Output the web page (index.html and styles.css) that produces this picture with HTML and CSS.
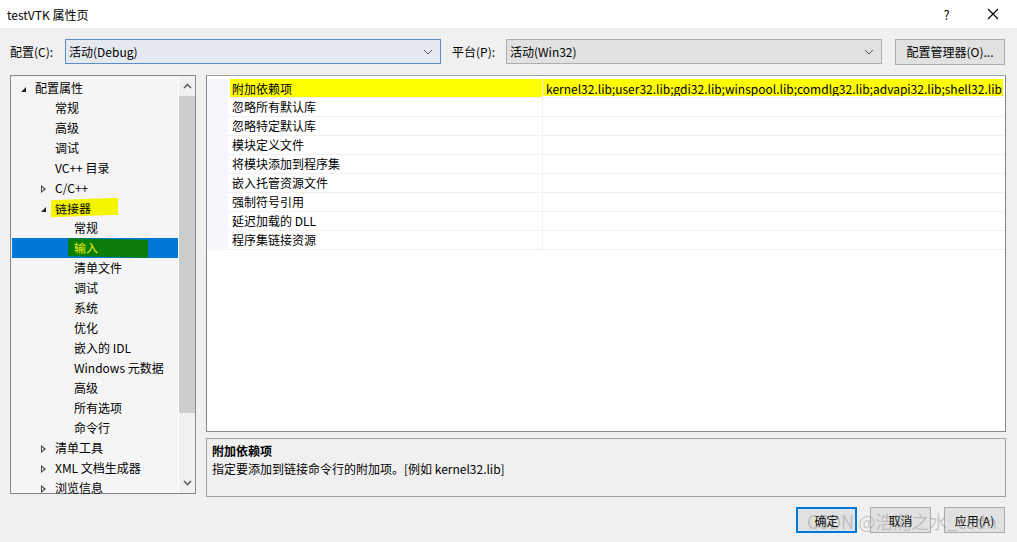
FILE: index.html
```html
<!DOCTYPE html>
<html>
<head>
  <title>testVTK 属性页</title>
  <link rel="stylesheet" href="styles.css">
</head>
<body>
  <div class="dialog">
    <div class="title-bar">
      <span class="title">testVTK 属性页</span>
      <span class="title-help">?</span>
      <span class="title-close">
        <svg width="12" height="12" viewBox="0 0 12 12"><path d="M1 1 L11 11 M11 1 L1 11" stroke="#000" stroke-width="1.1" fill="none"/></svg>
      </span>
    </div>

    <div class="config-row">
      <span class="label">配置(C):</span>
      <div class="combo combo-focus combo-config">
        <span>活动(Debug)</span>
        <svg class="chevron" width="10" height="6" viewBox="0 0 10 6"><path d="M1 1 L5 5 L9 1" stroke="#555" fill="none"/></svg>
      </div>
      <span class="label label-platform">平台(P):</span>
      <div class="combo combo-platform">
        <span>活动(Win32)</span>
        <svg class="chevron" width="10" height="6" viewBox="0 0 10 6"><path d="M1 1 L5 5 L9 1" stroke="#555" fill="none"/></svg>
      </div>
      <button class="btn btn-manager">配置管理器(O)...</button>
    </div>

    <div class="main">
      <div class="tree">
        <ul class="tree-list">
          <li class="lvl0"><span class="tri-open"></span>配置属性</li>
          <li class="lvl1">常规</li>
          <li class="lvl1">高级</li>
          <li class="lvl1">调试</li>
          <li class="lvl1">VC++ 目录</li>
          <li class="lvl1"><span class="tri-closed"></span>C/C++</li>
          <li class="lvl1"><span class="tri-open"></span><span class="mark-yellow">链接器</span></li>
          <li class="lvl2">常规</li>
          <li class="lvl2 selected"><span class="mark-green">输入</span></li>
          <li class="lvl2">清单文件</li>
          <li class="lvl2">调试</li>
          <li class="lvl2">系统</li>
          <li class="lvl2">优化</li>
          <li class="lvl2">嵌入的 IDL</li>
          <li class="lvl2">Windows 元数据</li>
          <li class="lvl2">高级</li>
          <li class="lvl2">所有选项</li>
          <li class="lvl2">命令行</li>
          <li class="lvl1"><span class="tri-closed"></span>清单工具</li>
          <li class="lvl1"><span class="tri-closed"></span>XML 文档生成器</li>
          <li class="lvl1"><span class="tri-closed"></span>浏览信息</li>
        </ul>
        <div class="scrollbar">
          <svg class="scroll-arrow" width="9" height="6" viewBox="0 0 9 6"><path d="M1 5 L4.5 1.5 L8 5" stroke="#606060" stroke-width="1.6" fill="none"/></svg>
          <div class="scroll-thumb"></div>
          <div class="scroll-rest"></div>
          <svg class="scroll-arrow" width="9" height="6" viewBox="0 0 9 6"><path d="M1 1 L4.5 4.5 L8 1" stroke="#606060" stroke-width="1.6" fill="none"/></svg>
        </div>
      </div>

      <div class="right">
        <div class="grid">
          <div class="grid-row">
            <div class="gutter"></div>
            <div class="name"><span class="mark-row">附加依赖项</span></div>
            <div class="value"><span class="mark-value">kernel32.lib;user32.lib;gdi32.lib;winspool.lib;comdlg32.lib;advapi32.lib;shell32.lib;ole32.lib;oleaut32.lib;uuid.lib;odbc32.lib;odbccp32.lib;%(AdditionalDependencies)</span></div>
          </div>
          <div class="grid-row"><div class="gutter"></div><div class="name">忽略所有默认库</div><div class="value"></div></div>
          <div class="grid-row"><div class="gutter"></div><div class="name">忽略特定默认库</div><div class="value"></div></div>
          <div class="grid-row"><div class="gutter"></div><div class="name">模块定义文件</div><div class="value"></div></div>
          <div class="grid-row"><div class="gutter"></div><div class="name">将模块添加到程序集</div><div class="value"></div></div>
          <div class="grid-row"><div class="gutter"></div><div class="name">嵌入托管资源文件</div><div class="value"></div></div>
          <div class="grid-row"><div class="gutter"></div><div class="name">强制符号引用</div><div class="value"></div></div>
          <div class="grid-row"><div class="gutter"></div><div class="name">延迟加载的 DLL</div><div class="value"></div></div>
          <div class="grid-row"><div class="gutter"></div><div class="name">程序集链接资源</div><div class="value"></div></div>
        </div>
        <div class="desc">
          <div class="desc-title">附加依赖项</div>
          <div class="desc-text">指定要添加到链接命令行的附加项。[例如 kernel32.lib]</div>
        </div>
      </div>
    </div>

    <div class="buttons">
      <button class="btn btn-ok">确定</button>
      <button class="btn">取消</button>
      <button class="btn">应用(A)</button>
    </div>

    <div class="watermark">CSDN @浩瀚之水_csdn</div>
  </div>
</body>
</html>
```

FILE: styles.css
```css
* {
  box-sizing: border-box;
}

body {
  margin: 0;
  font-family: "Segoe UI", "Noto Sans CJK SC", sans-serif;
  font-size: 12px;
  color: #000;
  background-color: #f0f0f0;
}

.dialog {
  position: relative;
  width: 1017px;
  height: 542px;
  overflow: hidden;
}

/* title bar */
.title-bar {
  display: flex;
  align-items: center;
  height: 28px;
  background-color: #fff;
  padding-left: 7px;
}

.title {
  flex: 1;
  font-size: 12px;
}

.title-help {
  width: 45px;
  text-align: center;
  font-size: 13px;
}

.title-close {
  display: flex;
  justify-content: center;
  width: 48px;
}

/* configuration row */
.config-row {
  display: flex;
  align-items: center;
  height: 25px;
  margin-top: 11px;
  padding-left: 10px;
}

.label {
  width: 55px;
}

.label-platform {
  width: 54px;
  margin-left: 11px;
}

.combo {
  display: flex;
  align-items: center;
  justify-content: space-between;
  height: 25px;
  padding: 0 7px 0 3px;
  border: 1px solid #adadad;
  background-color: #e1e1e1;
}

.combo-config {
  width: 376px;
}

.combo-focus {
  border-color: #5c8dc6;
  background-color: #e5e9f0;
}

.combo-platform {
  width: 376px;
}

.btn {
  height: 25px;
  font-family: inherit;
  font-size: 12px;
  color: #000;
  background-color: #e1e1e1;
  border: 1px solid #adadad;
  padding: 0;
}

.btn-manager {
  width: 110px;
  margin-left: 13px;
  height: 26px;
}

/* main panels */
.main {
  display: flex;
  height: 422px;
  margin-top: 11px;
  padding-left: 10px;
}

.tree {
  display: flex;
  width: 186px;
  height: 419px;
  border: 1px solid #828790;
  background-color: #f5f5f5;
}

.tree-list {
  flex: 1;
  list-style: none;
  margin: 0;
  padding: 2px 0 0 1px;
}

.tree-list li {
  position: relative;
  height: 20px;
  line-height: 20px;
  white-space: nowrap;
}

.lvl0 {
  padding-left: 23px;
}

.lvl1 {
  padding-left: 43px;
}

.lvl2 {
  padding-left: 62px;
}

.selected {
  background-color: #0078d7;
  color: #fff;
}

.tri-open {
  display: inline-block;
  width: 0;
  height: 0;
  border-left: 5px solid transparent;
  border-bottom: 5px solid #222;
  margin-left: -14px;
  margin-right: 9px;
  vertical-align: 1px;
}

.tri-closed {
  display: inline-block;
  position: relative;
  width: 0;
  height: 0;
  border-top: 4px solid transparent;
  border-bottom: 4px solid transparent;
  border-left: 5px solid #444;
  margin-left: -14px;
  margin-right: 9px;
  vertical-align: 0;
}

.tri-closed::after {
  content: "";
  position: absolute;
  left: -4px;
  top: -2px;
  border-top: 2px solid transparent;
  border-bottom: 2px solid transparent;
  border-left: 2px solid #f5f5f5;
}

.mark-yellow {
  display: inline-block;
  background-color: #f5f500;
  line-height: 17px;
  padding: 0 27px 0 4px;
  margin-left: -4px;
  transform: skewY(-2deg);
}

.mark-green {
  display: inline-block;
  background-color: #0a7d0a;
  color: #e8f000;
  line-height: 18px;
  padding: 0 50px 0 6px;
  margin-left: -6px;
  transform: skewY(1deg);
}

.scrollbar {
  display: flex;
  flex-direction: column;
  align-items: center;
  width: 17px;
  background-color: #f0f0f0;
  border-left: 1px solid #fff;
}

.scroll-arrow {
  margin: 7px 0;
}

.scroll-thumb {
  width: 16px;
  height: 317px;
  background-color: #cdcdcd;
}

.scroll-rest {
  flex: 1;
}

/* right column */
.right {
  display: flex;
  flex-direction: column;
  width: 800px;
  margin-left: 10px;
}

.grid {
  height: 357px;
  border: 1px solid #828790;
  border-top-color: #a0a0a0;
  background-color: #fff;
  padding-top: 3px;
  overflow: hidden;
}

.grid-row {
  display: flex;
  height: 19px;
}

.gutter {
  width: 21px;
  background-color: #f5f7fc;
}

.name {
  width: 315px;
  padding-left: 4px;
  line-height: 18px;
  border-bottom: 1px solid #f0f0f0;
  border-right: 1px solid #f0f0f0;
  white-space: nowrap;
}

.value {
  flex: 1;
  padding-left: 0;
  line-height: 18px;
  border-bottom: 1px solid #f0f0f0;
  white-space: nowrap;
  overflow: hidden;
}

.mark-row {
  display: block;
  margin-left: -2px;
  padding-left: 2px;
  background-color: #ffff00;
  height: 18px;
  line-height: 20px;
}

.mark-value {
  display: block;
  padding-left: 3px;
  background-color: #ffff00;
  height: 17px;
  line-height: 20px;
  margin-right: 2px;
  overflow: hidden;
}

.desc {
  height: 59px;
  margin-top: 6px;
  border: 1px solid #a0a0a0;
  padding: 3px 0 0 5px;
}

.desc-title {
  font-weight: bold;
  line-height: 17px;
}

.desc-text {
  line-height: 19px;
}

/* bottom buttons */
.buttons {
  display: flex;
  justify-content: flex-end;
  gap: 13px;
  margin-top: 10px;
  padding-right: 12px;
}

.buttons .btn {
  width: 61px;
  height: 26px;
}

.btn-ok {
  border: 2px solid #0078d7 !important;
}

.watermark {
  position: absolute;
  left: 807px;
  top: 508px;
  font-size: 18px;
  color: rgba(120, 120, 120, 0.35);
  white-space: nowrap;
  pointer-events: none;
}
```
